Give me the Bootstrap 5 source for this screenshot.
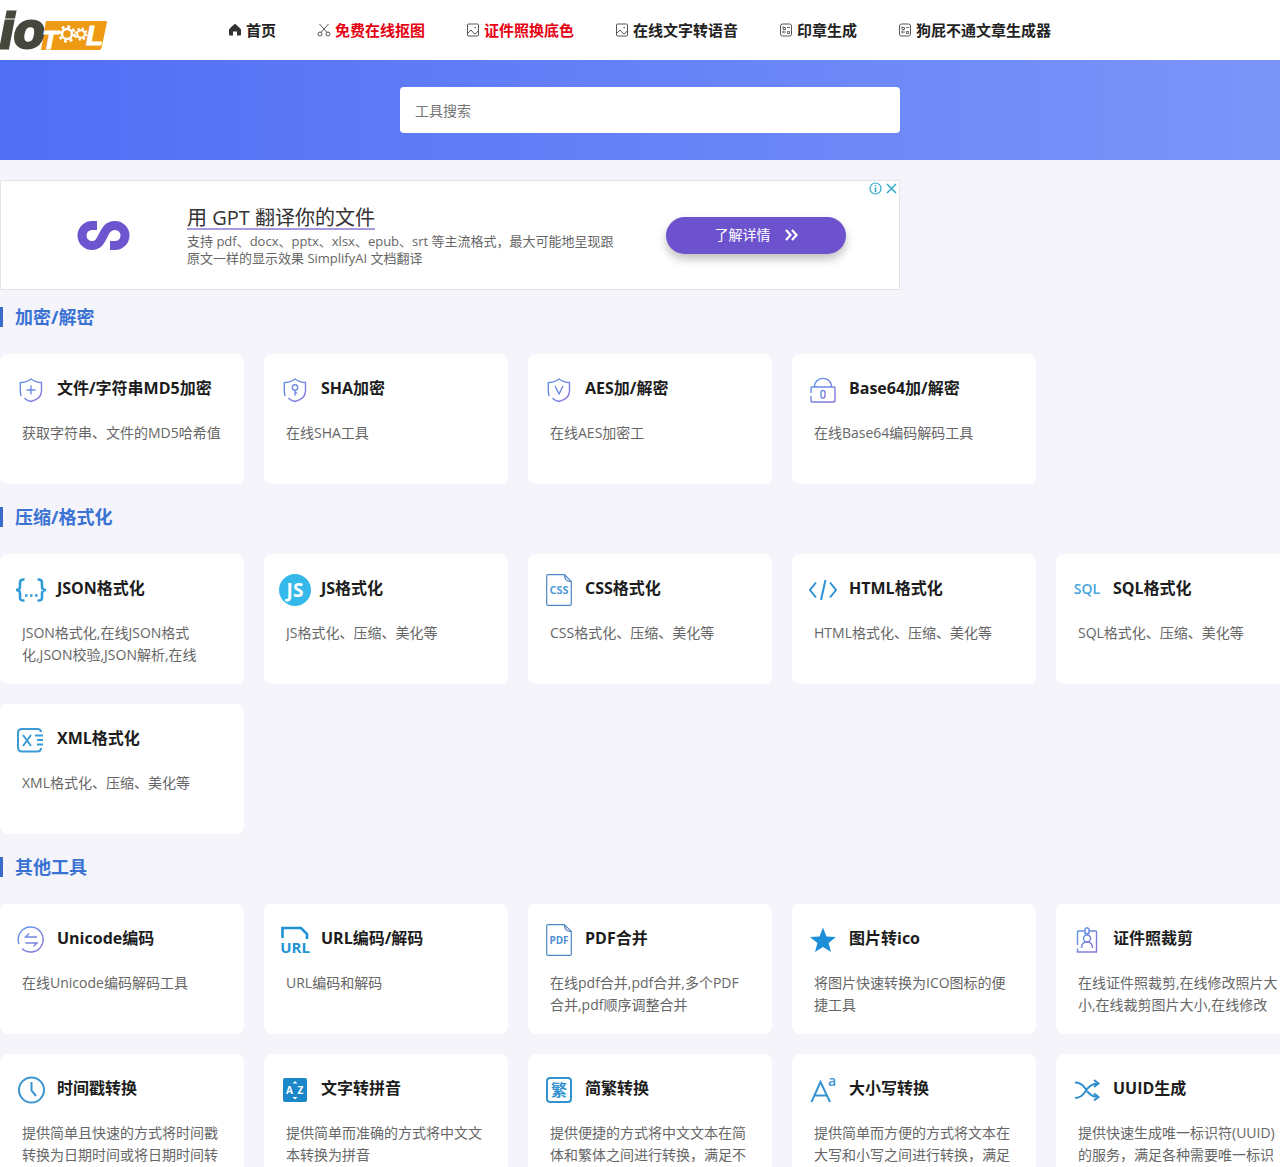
<!DOCTYPE html>
<html lang="zh-CN">
<head>
<meta charset="utf-8">
<meta name="viewport" content="width=device-width, initial-scale=1">
<title>ioTool 在线工具</title>
<link href="https://cdn.jsdelivr.net/npm/bootstrap@5.3.0/dist/css/bootstrap.min.css" rel="stylesheet">
<style>
  body { background: #f4f4fa; font-family: "Open Sans", "Noto Sans CJK SC", sans-serif; font-size: 14px; line-height: 22px; color: #222; overflow-x: hidden; }
  a { color: inherit; text-decoration: none; }
  svg { flex: none; display: block; }
  .site-wrap { width: 1300px; margin: 0 auto; }
  .site-head { height: 60px; }
  .site-nav { margin-left: 121px; gap: 41px; font-size: 15px; font-weight: 700; }
  .site-nav a { gap: 4px; color: #222; }
  .site-nav a.hot { color: #e60012; }
  .site-nav svg { color: #555; }
  .search-band { background: linear-gradient(90deg, #506ef5, #7c95f9); padding: 27px 0; }
  .search-box { width: 500px; height: 46px; border: 0; border-radius: 4px; padding: 0 15px; font-size: 14px; }
  .search-box::placeholder { color: #757575; }
  .promo { width: 900px; height: 110px; border: 1px solid #e3e3e8; margin: 20px 0 14px; padding-left: 76px; }
  .promo-text { margin-left: 57px; padding-top: 4px; width: 460px; font-size: 13px; line-height: 17px; color: #666; }
  .promo-text h2 { font-size: 20px; line-height: 20px; font-weight: 400; color: #333; border-bottom: 2px solid #a79be0; margin-bottom: 3px; }
  .promo-btn { width: 180px; height: 37px; margin-left: 19px; border-radius: 19px; background: #6c53cd; color: #fff; font-size: 14px; line-height: 20px; gap: 14px; box-shadow: 0 5px 10px rgba(0,0,0,.25); }
  .promo-btn:hover { background: #5c44bd; color: #fff; }
  .promo-tags { top: 1px; right: 1px; gap: 3px; color: #2ea9c9; }
  .group-head { font-size: 18px; line-height: 26px; font-weight: 700; color: #3a72d4; gap: 12px; margin-bottom: 24px; }
  .group-head::before { content: ""; width: 3px; height: 20px; background: #3a6bc8; }
  .tool-row { --bs-gutter-x: 20px; --bs-gutter-y: 20px; margin-bottom: 20px; }
  .tool { height: 130px; background: #fff; border-radius: 8px; padding: 20px 15px 0; }
  .tool h3 { font-size: 16px; line-height: 28px; font-weight: 700; color: #1c1c1c; margin: 0; }
  .tool-top { gap: 10px; height: 32px; margin-bottom: 16px; }
  .tool p { margin: 0 7px; height: 44px; overflow: hidden; color: #666; }
  .tool svg { fill: none; stroke-width: 2; }
  .tool svg.fine { stroke-width: 1.4; }
  .tool svg.heavy { stroke-width: 2.6; }
  .tool svg text { stroke: none; font-family: "Open Sans", "Noto Sans CJK SC", sans-serif; font-weight: 700; text-anchor: middle; }
  .tool svg text.thin { font-weight: 600; }
</style>
<script src="https://cdn.jsdelivr.net/npm/bootstrap@5.3.0/dist/js/bootstrap.bundle.min.js"></script>
</head>
<body>
<svg width="0" height="0" class="position-absolute" aria-hidden="true">
  <defs>
    <linearGradient id="violet" x1="0" y1="0" x2="1" y2="1"><stop offset="0" stop-color="#5b95e6"/><stop offset="1" stop-color="#8a74dc"/></linearGradient>
    <symbol id="shield" viewBox="0 0 32 32"><path d="M6 21.500 A13 13 0 0 1 5.300 17 V8.500 C10 8.500 13 7.300 16 5 C19 7.300 22 8.500 26.500 8.500 V17 C26.500 22.500 22 26 16 27.500 C13.500 27 11.500 26 9.800 24.500" stroke="url(#violet)" stroke-width="1.400" stroke-linecap="round" stroke-linejoin="round" fill="none"/></symbol>
    <symbol id="pic" viewBox="0 0 14 14"><rect x="1.500" y="1" width="11" height="12" rx="1" fill="none" stroke="currentColor"/><path d="M2 10 L5 7 L8 10.500 L10 10.500 L12 8 M8.500 4.500 h1.500" fill="none" stroke="currentColor"/></symbol>
    <symbol id="doc" viewBox="0 0 14 14"><rect x="1.500" y="1" width="11" height="12" rx="2" fill="none" stroke="currentColor"/><path d="M4 3.500 V6.500 H6.500 V4.500 H4 M8 4.500 H11 M3.500 9 H7 M5 7.500 L3.500 9 L5 10.500 M8.500 8.500 H10.500 V10.500 H8.500 Z" fill="none" stroke="currentColor" stroke-width=".9"/></symbol>
    <symbol id="file" viewBox="0 0 32 32"><path d="M21.500 .7 H5 Q3.700 .7 3.700 2 V30 Q3.700 31.300 5 31.300 H27 Q28.300 31.300 28.300 30 V7.500 L21.500 .7 Q21.500 7.500 28.300 7.500" stroke="#4f86c6" stroke-width="1.200" fill="none"/></symbol>
  </defs>
</svg>

<header class="bg-white">
  <div class="site-wrap site-head d-flex align-items-center">
    <a href="#" aria-label="ioTool">
      <svg width="107" height="60" viewBox="0 0 107 60">
        <path d="M46 21 H106 Q107 21 107 22 L101.500 48 Q101 50 99 50 H41 Z" fill="#ee9a14"/>
        <g font-family="Liberation Sans, sans-serif" font-weight="700" font-style="italic" fill="#fff" stroke="#fff">
          <text x="0" y="48" font-size="50" fill="#45483c" stroke="#45483c" stroke-width="3">io</text>
          <text x="42" y="49" font-size="26" stroke-width="1">T</text>
          <text x="86" y="45" font-size="28" stroke-width="1">L</text>
        </g>
        <g fill="none" stroke="#fff"><circle cx="67" cy="34" r="5" stroke-width="2.500"/><circle cx="67" cy="34" r="7.500" stroke-width="2.500" stroke-dasharray="3 2.900"/><circle cx="81" cy="34" r="3.800" stroke-width="2"/><circle cx="81" cy="34" r="5.600" stroke-width="2" stroke-dasharray="2.200 2.200"/></g>
      </svg>
    </a>
    <nav class="site-nav d-flex">
      <a href="#" class="d-flex align-items-center"><svg width="14" height="14" viewBox="0 0 14 14"><path d="M7 1 Q8 1 13 6.500 V11.500 Q13 12.500 12 12.500 H9 V8.500 H5 V12.500 H2 Q1 12.500 1 11.500 V6.500 Q6 1 7 1 Z" fill="#333"/></svg>首页</a>
      <a href="#" class="hot d-flex align-items-center"><svg width="14" height="14" viewBox="0 0 14 14" fill="none" stroke="currentColor"><path d="M2.500 1 L10 9.500 M11.500 1 L4 9.500"/><circle cx="3" cy="11" r="2"/><circle cx="11" cy="11" r="2"/></svg>免费在线抠图</a>
      <a href="#" class="hot d-flex align-items-center"><svg width="14" height="14"><use href="#pic"/></svg>证件照换底色</a>
      <a href="#" class="d-flex align-items-center"><svg width="14" height="14"><use href="#pic"/></svg>在线文字转语音</a>
      <a href="#" class="d-flex align-items-center"><svg width="14" height="14"><use href="#doc"/></svg>印章生成</a>
      <a href="#" class="d-flex align-items-center"><svg width="14" height="14"><use href="#doc"/></svg>狗屁不通文章生成器</a>
    </nav>
  </div>
</header>

<div class="search-band">
  <form class="site-wrap d-flex justify-content-center"><input class="search-box" type="search" placeholder="工具搜索" aria-label="工具搜索"></form>
</div>

<main class="site-wrap">
  <aside class="promo bg-white d-flex align-items-center position-relative">
    <svg width="53" height="29" viewBox="0 0 53 29"><path d="M20 4.500 H15 A10 10 0 0 0 15 24.500 C28 24.500 24 4.500 38 4.500 A10 10 0 0 1 38 24.500 H33" fill="none" stroke="#6e55d0" stroke-width="9"/></svg>
    <div class="promo-text">
      <h2 class="d-inline-block">用 GPT 翻译你的文件</h2>
      <div>支持 pdf、docx、pptx、xlsx、epub、srt 等主流格式，最大可能地呈现跟<br>原文一样的显示效果 SimplifyAI 文档翻译</div>
    </div>
    <button type="button" class="btn promo-btn d-flex align-items-center justify-content-center p-0">了解详情<svg width="13" height="12" viewBox="0 0 13 12" fill="none" stroke="#fff" stroke-width="2.200"><path d="M1 1 L5.500 6 L1 11 M7 1 L11.500 6 L7 11"/></svg></button>
    <div class="promo-tags position-absolute d-flex">
      <svg width="13" height="13" viewBox="0 0 13 13" fill="none" stroke="currentColor" stroke-width="1.200"><circle cx="6.500" cy="6.500" r="5.500"/><path d="M6.500 5.500 V10 M6.500 3 V4.300" stroke-width="1.600"/></svg>
      <svg width="13" height="13" viewBox="0 0 13 13" fill="none" stroke="currentColor" stroke-width="1.500"><path d="M2 2 L11 11 M11 2 L2 11"/></svg>
    </div>
  </aside>

  <section>
    <h2 class="group-head d-flex align-items-center">加密/解密</h2>
    <div class="row row-cols-5 tool-row">
      <div class="col"><a href="#" class="tool d-block"><div class="tool-top d-flex"><svg width="32" height="32"><use href="#shield"/><path d="M16 11.500 V20.500 M11.500 16 H20.500" stroke="#6f8be2" stroke-width="1.400"/></svg><h3>文件/字符串MD5加密</h3></div><p>获取字符串、文件的MD5哈希值</p></a></div>
      <div class="col"><a href="#" class="tool d-block"><div class="tool-top d-flex"><svg width="32" height="32"><use href="#shield"/><path d="M16 16 V21.500 M16 19 H18" stroke="#6f8be2" stroke-width="1.400"/><circle cx="16" cy="13.500" r="2.700" stroke="#6f8be2" stroke-width="1.400"/></svg><h3>SHA加密</h3></div><p>在线SHA工具</p></a></div>
      <div class="col"><a href="#" class="tool d-block"><div class="tool-top d-flex"><svg width="32" height="32"><use href="#shield"/><path d="M12 12 L16 20 L20 12" stroke="#6f8be2" stroke-width="1.400"/></svg><h3>AES加/解密</h3></div><p>在线AES加密工</p></a></div>
      <div class="col"><a href="#" class="tool d-block"><div class="tool-top d-flex"><svg width="32" height="32" class="fine" stroke="url(#violet)"><path d="M4 22 V27 Q4 28 5 28 H27 Q28 28 28 27 V14 Q28 13 27 13 H5 Q4 13 4 14 V19 M7.500 13 C7.500 1.500 24.500 1.500 24.500 13"/><rect x="14" y="16.500" width="4" height="7.500" rx="2"/></svg><h3>Base64加/解密</h3></div><p>在线Base64编码解码工具</p></a></div>
    </div>
  </section>

  <section>
    <h2 class="group-head d-flex align-items-center">压缩/格式化</h2>
    <div class="row row-cols-5 tool-row">
      <div class="col"><a href="#" class="tool d-block"><div class="tool-top d-flex"><svg width="32" height="32" class="heavy" stroke="#2f9bd8"><path d="M9.500 5.500 Q5 5 5 9 V12.500 Q5 16 1 16 Q5 16 5 19.500 V23.500 Q5 27 9.500 26.500 M22.500 5.500 Q27 5 27 9 V12.500 Q27 16 31 16 Q27 16 27 19.500 V23.500 Q27 27 22.500 26.500 M10 21.500 H12.500 M15 21.500 H17.500 M20 21.500 H22.500"/></svg><h3>JSON格式化</h3></div><p>JSON格式化,在线JSON格式化,JSON校验,JSON解析,在线</p></a></div>
      <div class="col"><a href="#" class="tool d-block"><div class="tool-top d-flex"><svg width="32" height="32"><circle cx="16" cy="16" r="16" fill="#35b8ea"/><text x="16" y="23" font-size="19" fill="#fff">JS</text></svg><h3>JS格式化</h3></div><p>JS格式化、压缩、美化等</p></a></div>
      <div class="col"><a href="#" class="tool d-block"><div class="tool-top d-flex"><svg width="32" height="32"><use href="#file"/><text x="16" y="20" font-size="11" fill="#4f9bd8">CSS</text></svg><h3>CSS格式化</h3></div><p>CSS格式化、压缩、美化等</p></a></div>
      <div class="col"><a href="#" class="tool d-block"><div class="tool-top d-flex"><svg width="32" height="32" stroke="#2f93d8"><path d="M9 8.500 L3 16 L9 23.500 M23 8.500 L29 16 L23 23.500 M18.500 6 L14 26"/></svg><h3>HTML格式化</h3></div><p>HTML格式化、压缩、美化等</p></a></div>
      <div class="col"><a href="#" class="tool d-block"><div class="tool-top d-flex"><svg width="32" height="32"><text class="thin" x="16" y="20" font-size="14" fill="#45a3dc">SQL</text></svg><h3>SQL格式化</h3></div><p>SQL格式化、压缩、美化等</p></a></div>
      <div class="col"><a href="#" class="tool d-block"><div class="tool-top d-flex"><svg width="32" height="32" stroke="#3a9bd5"><path d="M26 8 Q26 5 22 5 H7 Q3 5 3 9 V23 Q3 27.500 7 27.500 H22 Q26 27.500 26 24 M8 11 L16 22 M16 11 L8 22 M20 11.500 H28 M22 16 H28 M22 20.500 H28"/></svg><h3>XML格式化</h3></div><p>XML格式化、压缩、美化等</p></a></div>
    </div>
  </section>

  <section>
    <h2 class="group-head d-flex align-items-center">其他工具</h2>
    <div class="row row-cols-5 tool-row">
      <div class="col"><a href="#" class="tool d-block"><div class="tool-top d-flex"><svg width="32" height="32" class="fine" stroke="url(#violet)"><path d="M4 20 A12.500 12.500 0 1 1 7 24.500 M22 13 H10.500 L14 9.500 M10.500 19 H22 L18.500 22.500"/></svg><h3>Unicode编码</h3></div><p>在线Unicode编码解码工具</p></a></div>
      <div class="col"><a href="#" class="tool d-block"><div class="tool-top d-flex"><svg width="32" height="32" class="heavy" stroke="#2093d5"><path d="M3.500 14 V4 H22 L28 10 V15"/><text x="16" y="29" font-size="15" fill="#2093d5">URL</text></svg><h3>URL编码/解码</h3></div><p>URL编码和解码</p></a></div>
      <div class="col"><a href="#" class="tool d-block"><div class="tool-top d-flex"><svg width="32" height="32"><use href="#file"/><text x="16" y="20" font-size="10" fill="#4f8fd0">PDF</text></svg><h3>PDF合并</h3></div><p>在线pdf合并,pdf合并,多个PDF合并,pdf顺序调整合并</p></a></div>
      <div class="col"><a href="#" class="tool d-block"><div class="tool-top d-flex"><svg width="32" height="32"><path d="M16 3.500 L19.500 12.500 L29 13 L21.600 19 L24 28 L16 23 L8 28 L10.400 19 L3 13 L12.500 12.500 Z" fill="#1c8fd6"/></svg><h3>图片转ico</h3></div><p>将图片快速转换为ICO图标的便捷工具</p></a></div>
      <div class="col"><a href="#" class="tool d-block"><div class="tool-top d-flex"><svg width="32" height="32" class="fine" stroke="url(#violet)"><path d="M13.500 7 H7 Q6.500 7 6.500 8 V21 M6.500 24.500 V28 H25.500 V8 Q25.500 7 25 7 H18.500 M14 9.500 V5 Q16 2.500 18 5 V9.500 Z M10.500 24 Q10.500 18 16 18 Q21.500 18 21.500 24"/><circle cx="16" cy="14.500" r="3.500"/></svg><h3>证件照裁剪</h3></div><p>在线证件照裁剪,在线修改照片大小,在线裁剪图片大小,在线修改</p></a></div>
      <div class="col"><a href="#" class="tool d-block"><div class="tool-top d-flex"><svg width="32" height="32" stroke="#3a94d0"><circle cx="16.500" cy="16" r="12.500"/><path d="M16.500 8 V16.500 L21 22"/></svg><h3>时间戳转换</h3></div><p>提供简单且快速的方式将时间戳转换为日期时间或将日期时间转</p></a></div>
      <div class="col"><a href="#" class="tool d-block"><div class="tool-top d-flex"><svg width="32" height="32"><rect x="4" y="4" width="24" height="24" rx="2" fill="#1b87c9"/><text x="10.500" y="20" font-size="10" fill="#fff">A</text><text x="21.500" y="20" font-size="10" fill="#fff">Z</text><path d="M13.500 9.500 L16 7 L18.500 9.500 Z M13.500 23 L16 25.500 L18.500 23 Z" fill="#fff"/></svg><h3>文字转拼音</h3></div><p>提供简单而准确的方式将中文文本转换为拼音</p></a></div>
      <div class="col"><a href="#" class="tool d-block"><div class="tool-top d-flex"><svg width="32" height="32" stroke="#3393cf"><rect x="4" y="4" width="24" height="24" rx="3"/><text x="16" y="22" font-size="16" fill="#3393cf">繁</text></svg><h3>简繁转换</h3></div><p>提供便捷的方式将中文文本在简体和繁体之间进行转换，满足不</p></a></div>
      <div class="col"><a href="#" class="tool d-block"><div class="tool-top d-flex"><svg width="32" height="32" stroke="#3a94d0"><path d="M4.500 28 L13.500 8 L23 28 M8 21.500 H20"/><text class="thin" x="25" y="12" font-size="14" fill="#3a94d0">a</text></svg><h3>大小写转换</h3></div><p>提供简单而方便的方式将文本在大写和小写之间进行转换，满足</p></a></div>
      <div class="col"><a href="#" class="tool d-block"><div class="tool-top d-flex"><svg width="32" height="32" stroke="#2f8fcc"><path d="M4 8.500 Q10 8.500 14 14 Q19 23 27 23 M4 24 Q10 24 14 18 Q19 9.500 27 9.500 M23 6 L27.500 9.500 L23 13 M23 19.500 L27.500 23 L23 26.500"/></svg><h3>UUID生成</h3></div><p>提供快速生成唯一标识符(UUID)的服务，满足各种需要唯一标识</p></a></div>
    </div>
  </section>
</main>
</body>
</html>
